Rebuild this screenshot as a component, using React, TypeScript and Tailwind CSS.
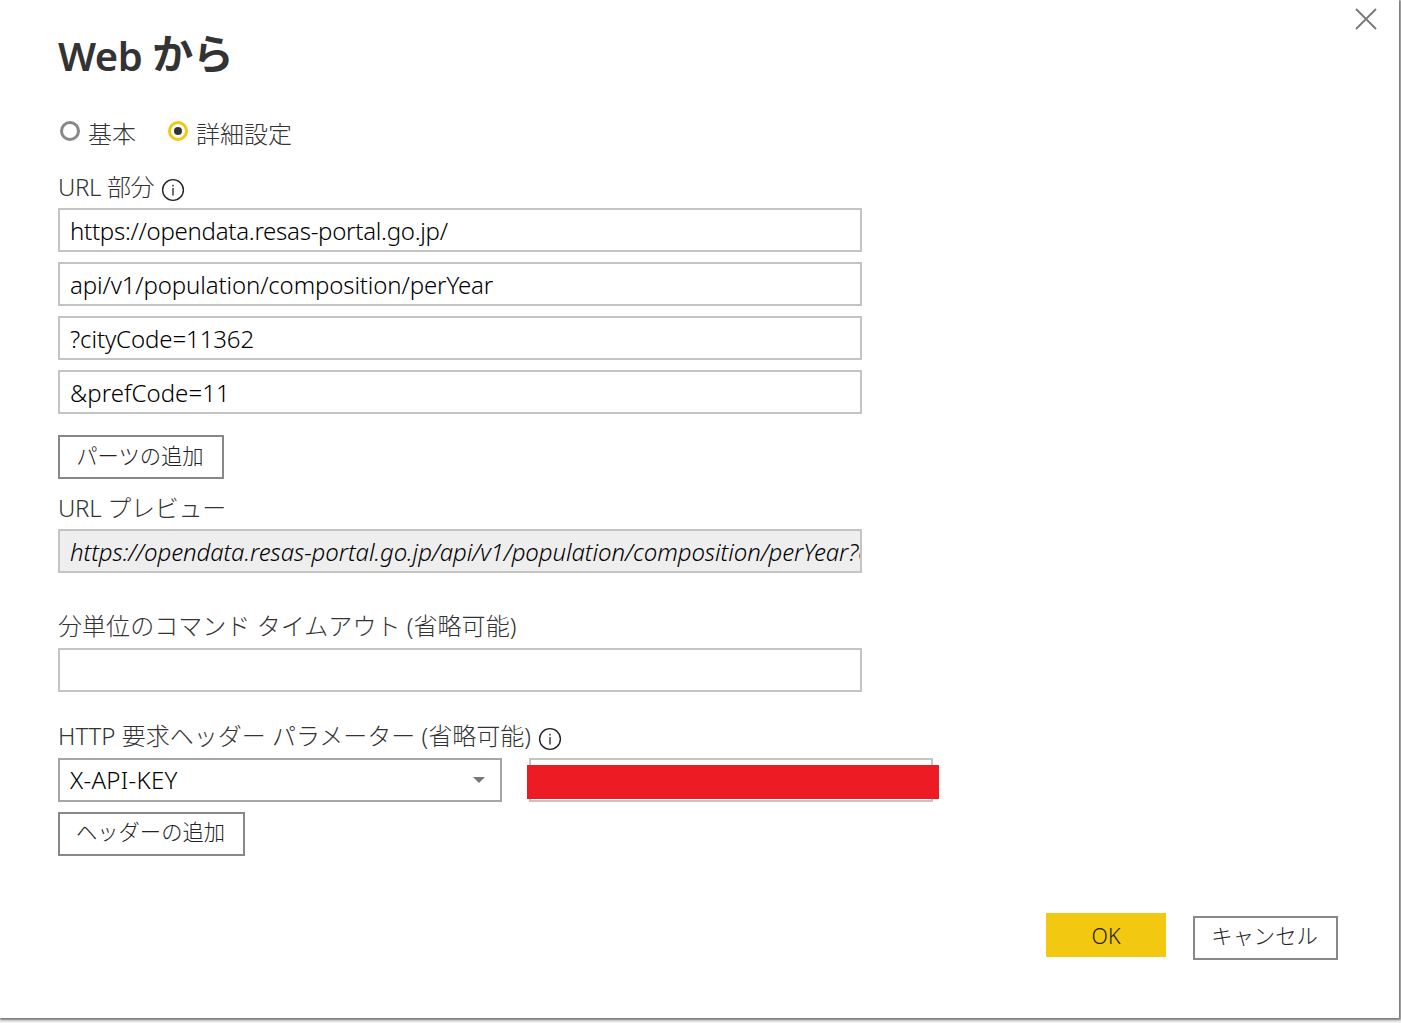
import React, { useState } from 'react';
import clsx from 'clsx';

const urlParts = [
  { text: 'https://opendata.resas-portal.go.jp/', tracking: 'tracking-[-0.27px]' },
  { text: 'api/v1/population/composition/perYear', tracking: 'tracking-[-0.13px]' },
  { text: '?cityCode=11362', tracking: 'tracking-[-0.1px]' },
  { text: '&prefCode=11', tracking: 'tracking-[0.05px]' },
];

function InfoIcon() {
  return (
    <svg className="w-6 h-6 mt-[7px] shrink-0" viewBox="0 0 24 24" fill="none" stroke="#222" strokeWidth="1.4">
      <circle cx="12" cy="12" r="10.4" />
      <path d="M12 10v7.4M12 6.8v1.6" strokeWidth="1.3" />
    </svg>
  );
}

function Radio({ label, checked, onSelect }: { label: string; checked: boolean; onSelect: () => void }) {
  return (
    <button type="button" role="radio" aria-checked={checked} onClick={onSelect} className="flex items-start cursor-pointer">
      <span
        className={clsx(
          'w-5 h-5 mt-[7px] mr-2 rounded-full border-[3px] flex items-center justify-center',
          checked ? 'border-[#f2c811]' : 'border-[#888]'
        )}
      >
        {checked && <span className="w-2 h-2 rounded-full bg-[#333]" />}
      </span>
      <span className="h-9 leading-9 mt-0.5">{label}</span>
    </button>
  );
}

function Field({ value, className }: { value: string; className?: string }) {
  return (
    <div className={clsx('h-11 w-[804px] border-2 border-[#c4c4c4] px-2.5 text-black leading-[42px] whitespace-nowrap overflow-hidden', className)}>
      {value}
    </div>
  );
}

export default function App() {
  const [mode, setMode] = useState<'basic' | 'advanced'>('advanced');

  return (
    <div className="w-[1401px] h-[1023px] overflow-hidden bg-[#f0f0f0]">
      <div className="relative w-[1399px] h-[1018px] bg-white shadow-[1px_1px_2px_1px_#777] px-[58px] pt-8 text-2xl font-light text-[#333] font-['Noto_Sans','Noto_Sans_CJK_JP',sans-serif]">
        <button type="button" aria-label="閉じる" className="absolute top-2 right-[22px] cursor-pointer">
          <svg className="w-[22px] h-[22px]" viewBox="0 0 22 22" stroke="#777" strokeWidth="1.8">
            <path d="M1 1l20 20M21 1L1 21" />
          </svg>
        </button>

        <h1 className="h-12 flex gap-2.5 leading-[48px] text-[40px] font-semibold whitespace-nowrap">
          <span className="tracking-[-0.5px]">Web</span>
          <span className="-mt-[3px] text-[41px] font-bold tracking-[-0.5px]">から</span>
        </h1>

        <div role="radiogroup" className="mt-[34px] h-9 flex gap-8 pl-0.5">
          <Radio label="基本" checked={mode === 'basic'} onSelect={() => setMode('basic')} />
          <Radio label="詳細設定" checked={mode === 'advanced'} onSelect={() => setMode('advanced')} />
        </div>

        {/* URL parts */}
        <div className="mt-[17px] h-[41px] pb-0.5 flex items-center gap-[7px]">
          <span className="tracking-[-0.35px]">URL 部分</span>
          <InfoIcon />
        </div>
        <div className="flex flex-col gap-2.5">
          {urlParts.map((part) => (
            <Field key={part.text} value={part.text} className={part.tracking} />
          ))}
        </div>
        <button type="button" className="mt-[21px] block w-[166px] h-11 border-2 border-[#888] pb-[3px] pr-0.5 text-[21.3px] leading-8 text-[#222] cursor-pointer">
          パーツの追加
        </button>

        {/* URL preview */}
        <div className="mt-2.5 h-10 leading-[38px] tracking-[-0.25px]">URL プレビュー</div>
        <Field value={urlParts.map((part) => part.text).join('')} className="bg-[#eee] italic tracking-[-0.07px]" />

        {/* Timeout */}
        <div className="mt-[34px] h-[41px] leading-[38px] tracking-[0.05px]">分単位のコマンド タイムアウト (省略可能)</div>
        <Field value="" />

        {/* Request headers */}
        <div className="mt-[25px] h-[41px] pb-1 flex items-center gap-[7px]">
          <span>HTTP 要求ヘッダー パラメーター (省略可能)</span>
          <InfoIcon />
        </div>
        <div className="flex gap-[27px]">
          <div className="w-[444px] h-11 border-2 border-[#a6a6a6] pl-2.5 pr-[15px] flex items-center justify-between text-black">
            <span className="tracking-[0.3px]">X-API-KEY</span>
            <svg className="w-3 h-1.5" viewBox="0 0 12 6" fill="#777">
              <path d="M0 0h12L6 6z" />
            </svg>
          </div>
          <div className="relative w-[404px] h-11 border-2 border-[#c4c4c4]">
            <div className="absolute -left-1 top-[5px] w-[412px] h-[34px] bg-[#ed1c24]" />
          </div>
        </div>
        <button type="button" className="mt-2.5 block w-[187px] h-11 border-2 border-[#888] pb-1 pr-0.5 text-[21.3px] leading-8 text-[#222] cursor-pointer">
          ヘッダーの追加
        </button>

        <div className="mt-[57px] flex justify-end gap-[27px] pr-[3px] text-[21.3px] text-[#222]">
          <button type="button" className="w-[120px] h-11 bg-[#f2c811] pt-0.5 cursor-pointer">OK</button>
          <button type="button" className="mt-[3px] w-[145px] h-11 border-2 border-[#888] pb-1 pr-0.5 leading-8 cursor-pointer">キャンセル</button>
        </div>
      </div>
    </div>
  );
}
